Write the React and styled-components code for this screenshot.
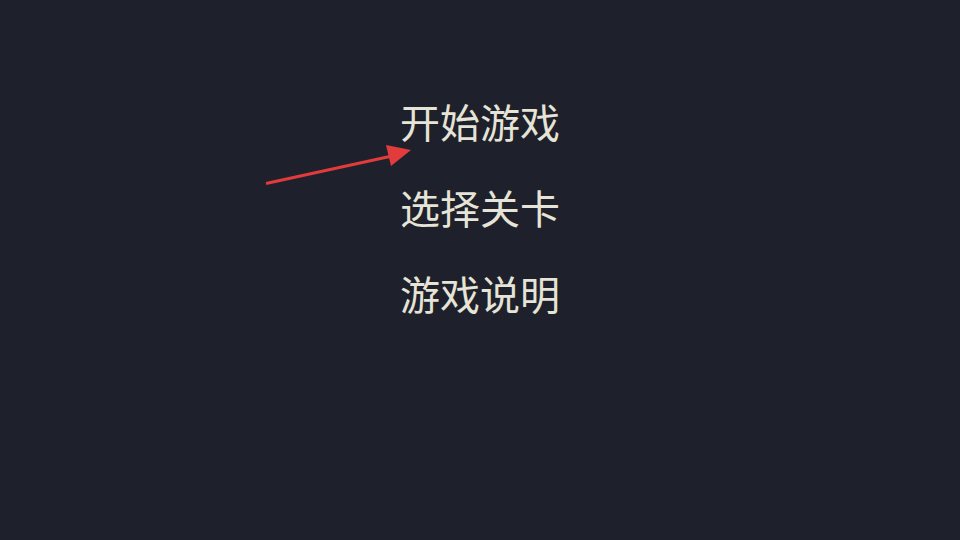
import React from 'react';
import styled, { createGlobalStyle } from 'styled-components';

const GlobalStyle = createGlobalStyle`
  html, body {
    margin: 0;
    padding: 0;
    background-color: #1e212c;
  }
`;

const Screen = styled.div`
  width: 960px;
  height: 540px;
  background-color: #1e212c;
  position: relative;
  overflow: hidden;
  display: flex;
  justify-content: center;
  padding-top: 92px;
  box-sizing: border-box;
`;

const Menu = styled.ul`
  list-style: none;
  margin: 0;
  padding: 0;
  display: flex;
  flex-direction: column;
  gap: 28px;
`;

const MenuItem = styled.li`
  font-family: 'Noto Sans CJK SC', 'Noto Sans', sans-serif;
  font-size: 40px;
  line-height: 58px;
  color: #e6e4d6;
  cursor: pointer;
`;

const Pointer = styled.svg`
  position: absolute;
  left: 0;
  top: 0;
  pointer-events: none;
`;

const items = ['开始游戏', '选择关卡', '游戏说明'];

const App = () => (
    <Screen>
        <GlobalStyle />
        <Menu>
            {items.map(item => <MenuItem key={item}>{item}</MenuItem>)}
        </Menu>
        {/* red arrow pointing at the selected item */}
        <Pointer width="960" height="540" viewBox="0 0 960 540">
            <line x1="266" y1="183.5" x2="392" y2="156" stroke="#e23b3b" strokeWidth="3" />
            <polygon points="411,150 386,145 391,166" fill="#e23b3b" />
        </Pointer>
    </Screen>
);

export default App;
